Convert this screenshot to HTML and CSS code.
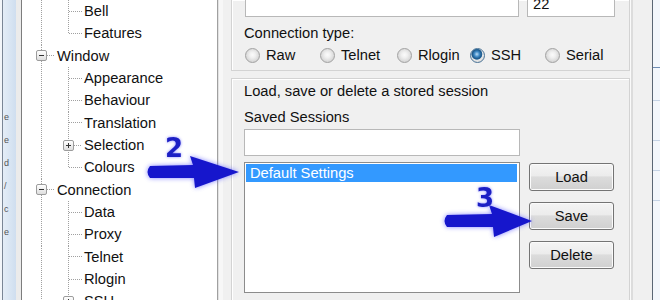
FILE: index.html
```html
<!DOCTYPE html>
<html>
<head>
<meta charset="utf-8">
<link rel="stylesheet" href="styles.css">
</head>
<body>
<div class="win">
  <div class="desk">
    <div class="ghost"><span>e</span><span>e</span><span>d</span><span>/</span><span>c</span><span>e</span></div>
  </div>
  <div class="deskgap"></div>
  <ul class="tree">
    <li class="row c"><span class="h"></span><span class="t">Bell</span></li>
    <li class="row c last"><span class="h"></span><span class="t">Features</span></li>
    <li class="row r"><span class="exp minus"></span><span class="h"></span><span class="t">Window</span></li>
    <li class="row c"><span class="h"></span><span class="t">Appearance</span></li>
    <li class="row c"><span class="h"></span><span class="t">Behaviour</span></li>
    <li class="row c"><span class="h"></span><span class="t">Translation</span></li>
    <li class="row c x"><span class="exp plus"></span><span class="h"></span><span class="t">Selection</span></li>
    <li class="row c last"><span class="h"></span><span class="t">Colours</span></li>
    <li class="row r"><span class="exp minus"></span><span class="h"></span><span class="t">Connection</span></li>
    <li class="row c"><span class="h"></span><span class="t">Data</span></li>
    <li class="row c"><span class="h"></span><span class="t">Proxy</span></li>
    <li class="row c"><span class="h"></span><span class="t">Telnet</span></li>
    <li class="row c"><span class="h"></span><span class="t">Rlogin</span></li>
    <li class="row c x"><span class="exp plus"></span><span class="h"></span><span class="t">SSH</span></li>
  </ul>
  <div class="split"></div>
  <div class="main">
    <div class="grp grp1">
      <div class="hostrow">
        <div class="field host"></div>
        <div class="field port">22</div>
      </div>
      <div class="label">Connection type:</div>
      <div class="radios">
        <div class="opt"><span class="radio"></span><span>Raw</span></div>
        <div class="opt"><span class="radio"></span><span>Telnet</span></div>
        <div class="opt"><span class="radio"></span><span>Rlogin</span></div>
        <div class="opt"><span class="radio on"></span><span>SSH</span></div>
        <div class="opt"><span class="radio"></span><span>Serial</span></div>
      </div>
    </div>
    <div class="grp grp2">
      <div class="title">Load, save or delete a stored session</div>
      <div class="sub">Saved Sessions</div>
      <div class="sess">
        <div class="col">
          <div class="field name"></div>
          <div class="list"><div class="sel">Default Settings</div></div>
        </div>
        <div class="btns">
          <div class="btn">Load</div>
          <div class="btn">Save</div>
          <div class="btn">Delete</div>
        </div>
      </div>
    </div>
  </div>
  <div class="edge"></div>
  <div class="outside"></div>
</div>
<svg class="overlay" width="660" height="300" viewBox="0 0 660 300">
  <defs>
    <filter id="glow" x="-30%" y="-60%" width="160%" height="220%">
      <feGaussianBlur stdDeviation="2.5"/>
    </filter>
  </defs>
  <g filter="url(#glow)" fill="#5c5cff" opacity="0.75">
    <path d="M150,166 L193,165 L190,156 L239,172 L195,188 L194,178 L150,178 Q145,172 150,166 Z"/>
    <path d="M447,215 L492,214 L489,205 L532,221 L494,237 L493,227 L447,227 Q442,221 447,215 Z"/>
  </g>
  <g fill="#1616cc">
    <path d="M150,166 L193,165 L190,156 L239,172 L195,188 L194,178 L150,178 Q145,172 150,166 Z"/>
    <path d="M447,215 L492,214 L489,205 L532,221 L494,237 L493,227 L447,227 Q442,221 447,215 Z"/>
  </g>
  <text class="num" x="165" y="157">2</text>
  <text class="num" x="476" y="207">3</text>
</svg>
</body>
</html>
```
FILE: styles.css
```css
* { box-sizing: border-box; margin: 0; padding: 0; }
html, body { width: 660px; height: 300px; overflow: hidden; }
body {
  position: relative;
  background: #f0f0f0;
  font-family: "Liberation Sans", Arial, sans-serif;
  font-size: 14.7px;
  color: #111;
}
.win { display: flex; height: 300px; }

.desk {
  width: 16px; flex: none; overflow: hidden;
  background: linear-gradient(to right, #f3f6fa 0, #f3f6fa 2px, #7a8696 2px, #7a8696 3px, #e4edf7 3px, #cfdeef 100%);
}
.ghost {
  display: flex; flex-direction: column;
  padding-top: 106px; padding-left: 4px;
  font-size: 9px; line-height: 23px; color: #555;
}
.deskgap { width: 5px; flex: none; background: #ebebeb; }

.tree {
  width: 197px; flex: none; list-style: none; background: #fff;
  border-left: 1px solid #7d7d7d; border-right: 1px solid #a0a0a0;
  color: #111;
}
.row {
  height: 22.33px; display: flex; align-items: center; white-space: nowrap;
  background-image: repeating-linear-gradient(#a0a0a0 0 1px, transparent 1px 2px);
  background-size: 1px 100%;
  background-position: 19px 0;
  background-repeat: no-repeat;
}
.row.c {
  padding-left: 47px;
  background-image: repeating-linear-gradient(#a0a0a0 0 1px, transparent 1px 2px), repeating-linear-gradient(#a0a0a0 0 1px, transparent 1px 2px);
  background-size: 1px 100%, 1px 100%;
  background-position: 19px 0, 46px 0;
}
.row.c.last { background-size: 1px 100%, 1px 50%; }
.row.c.x { padding-left: 41px; }
.row.r { padding-left: 14px; }
.h {
  flex: none; height: 1px; width: 13px;
  background: repeating-linear-gradient(to right, #a0a0a0 0 1px, transparent 1px 2px);
}
.row.c.x .h, .row.r .h { width: 8px; }
.t { margin-left: 2px; }
.exp {
  flex: none; width: 11px; height: 11px;
  border: 1px solid #9c9c9c; border-radius: 2px;
}
.exp.minus {
  background: linear-gradient(#333, #333) center / 5px 1px no-repeat, linear-gradient(#ffffff, #dedede);
}
.exp.plus {
  background: linear-gradient(#333, #333) center / 5px 1px no-repeat, linear-gradient(#333, #333) center / 1px 5px no-repeat, linear-gradient(#ffffff, #dedede);
}

.split {
  width: 13px; flex: none; background: #f0f0f0;
  border-left: 1px solid #e2e2e2;
  box-shadow: inset 4px 0 0 #f7f7f7;
}
.main { width: 399px; flex: none; display: flex; flex-direction: column; }
.grp {
  border: 1px solid #d3d3d3;
  box-shadow: inset 1px 1px 0 #fff;
  padding: 0 12px;
}
.grp1 { border-top: none; padding-bottom: 6px; }
.hostrow { display: flex; gap: 8px; margin-top: -5px; margin-left: 1px; }
.field { height: 22px; background: #fff; border: 1px solid #b8b8b8; }
.host { width: 274px; }
.port { width: 88px; padding: 1px 0 0 5px; line-height: 14px; }
.label { line-height: 18px; margin-top: 7px; }
.radios {
  display: grid; grid-template-columns: 75px 77px 73px 75px auto;
  margin-top: 4px; margin-left: 1px; height: 18px;
}
.opt { display: flex; align-items: center; gap: 6px; line-height: 18px; }
.radio {
  flex: none; width: 15px; height: 15px; border-radius: 50%;
  border: 1px solid #a2a2a2;
  background: radial-gradient(circle at 50% 45%, #fbfbfb 0, #f0f0f0 30%, #d4d4d4 75%, #c6c6c6 100%);
}
.radio.on {
  border-color: #4a7396;
  background: radial-gradient(circle at 45% 40%, #b8dcf6 0, #3d88c4 25%, #1e5a8c 42%, #2c6a9c 48%, #e8e8e8 55%, #cfcfcf 100%);
}

.grp2 { margin-top: 7px; border-bottom: none; flex: 1; }
.title { line-height: 18px; margin-top: 3px; }
.sub { line-height: 18px; margin-top: 8px; }
.sess { display: flex; margin-top: 3px; }
.col { width: 276px; display: flex; flex-direction: column; }
.name { height: 27px; }
.list {
  margin-top: 6px; height: 131px; background: #fff;
  border: 1px solid #8c8c8c; padding: 1px 2px 0 1px;
}
.sel {
  height: 18px; line-height: 18px; padding-left: 4px;
  background: #3399ff; color: #fff;
}
.btns {
  width: 85px; margin-left: 9px; padding-top: 34px;
  display: flex; flex-direction: column; gap: 11px;
}
.btn {
  height: 28px; line-height: 26px; text-align: center;
  border: 1px solid #747474; border-radius: 3px;
  background: linear-gradient(#f4f4f4 0, #ececec 45%, #dcdcdc 50%, #d0d0d0 100%);
  box-shadow: inset 0 0 0 1px #fbfbfb;
}

.edge {
  width: 23px; flex: none; background: #f0f0f0;
  border-left: 1px solid #fafafa;
  border-right: 1px solid #5b6775;
  box-shadow: inset 2px 0 0 #dcdcdc;
}
.outside {
  flex: 1;
  background-color: #f3f7fc;
  background-image:
    linear-gradient(#6f8db4, #6f8db4), linear-gradient(#c4d3e6, #c4d3e6),
    linear-gradient(#c4d3e6, #c4d3e6), linear-gradient(#c4d3e6, #c4d3e6),
    linear-gradient(#c4d3e6, #c4d3e6);
  background-size: 100% 1px;
  background-repeat: no-repeat;
  background-position: 0 67px, 0 100px, 0 140px, 0 170px, 0 200px;
}

.overlay { position: absolute; left: 0; top: 0; pointer-events: none; }
.num {
  font-family: "DejaVu Sans", sans-serif; font-weight: bold; font-size: 26px;
  fill: #1c1fc4;
  filter: drop-shadow(0 0 1.5px #8a8aff);
}
```
